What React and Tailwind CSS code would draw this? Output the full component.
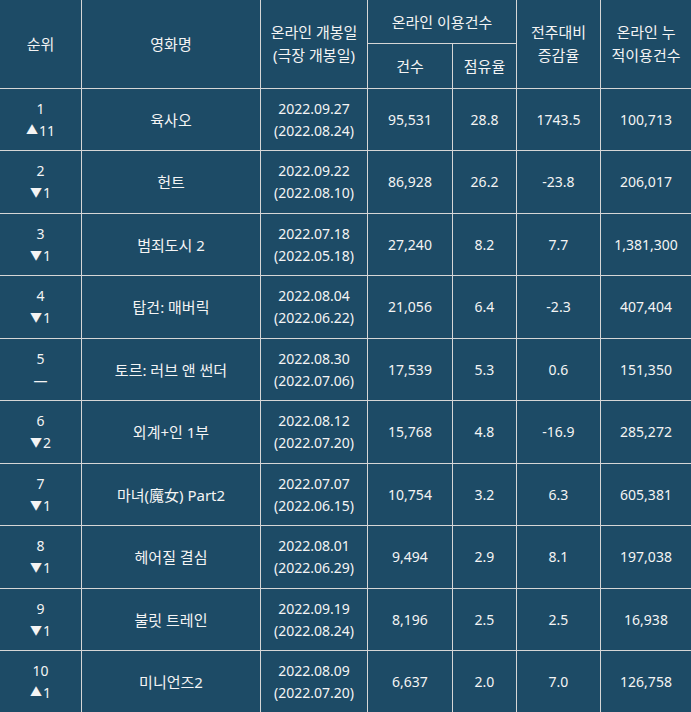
const rows = [
  { rank: 1, dir: 'up', diff: 11, title: '육사오', online: '2022.09.27', theater: '2022.08.24', count: '95,531', share: '28.8', change: '1743.5', total: '100,713' },
  { rank: 2, dir: 'down', diff: 1, title: '헌트', online: '2022.09.22', theater: '2022.08.10', count: '86,928', share: '26.2', change: '-23.8', total: '206,017' },
  { rank: 3, dir: 'down', diff: 1, title: '범죄도시 2', online: '2022.07.18', theater: '2022.05.18', count: '27,240', share: '8.2', change: '7.7', total: '1,381,300' },
  { rank: 4, dir: 'down', diff: 1, title: '탑건: 매버릭', online: '2022.08.04', theater: '2022.06.22', count: '21,056', share: '6.4', change: '-2.3', total: '407,404' },
  { rank: 5, dir: 'same', diff: null, title: '토르: 러브 앤 썬더', online: '2022.08.30', theater: '2022.07.06', count: '17,539', share: '5.3', change: '0.6', total: '151,350' },
  { rank: 6, dir: 'down', diff: 2, title: '외계+인 1부', online: '2022.08.12', theater: '2022.07.20', count: '15,768', share: '4.8', change: '-16.9', total: '285,272' },
  { rank: 7, dir: 'down', diff: 1, title: '마녀(魔女) Part2', online: '2022.07.07', theater: '2022.06.15', count: '10,754', share: '3.2', change: '6.3', total: '605,381' },
  { rank: 8, dir: 'down', diff: 1, title: '헤어질 결심', online: '2022.08.01', theater: '2022.06.29', count: '9,494', share: '2.9', change: '8.1', total: '197,038' },
  { rank: 9, dir: 'down', diff: 1, title: '불릿 트레인', online: '2022.09.19', theater: '2022.08.24', count: '8,196', share: '2.5', change: '2.5', total: '16,938' },
  { rank: 10, dir: 'up', diff: 1, title: '미니언즈2', online: '2022.08.09', theater: '2022.07.20', count: '6,637', share: '2.0', change: '7.0', total: '126,758' },
]

const cols = 'grid grid-cols-[82px_179px_107px_85px_64px_84px_90px]'
const cell = 'flex flex-col items-center justify-center text-center border-[#d6d6d6]'

function Rank({ dir, diff }) {
  if (dir === 'same') return <span>—</span>
  return (
    <span className="flex items-center">
      <span className="text-[12px] mr-[1px]">{dir === 'up' ? '▲' : '▼'}</span>
      {diff}
    </span>
  )
}

export default function App() {
  return (
    <div
      className="w-[691px] h-[712px] overflow-hidden bg-[#1d4b66] text-[#f4f4f4] text-[14px] leading-[22px]"
      style={{ fontFamily: '"Noto Sans", "Noto Sans CJK KR", sans-serif' }}
    >
      {/* header */}
      <div className={`${cols} grid-rows-[44px_45px] text-[15px]`}>
        <div className={`${cell} row-span-2 border-r border-b`}>순위</div>
        <div className={`${cell} row-span-2 border-r border-b`}>영화명</div>
        <div className={`${cell} row-span-2 border-r border-b leading-[23px]`}>
          <span>온라인 개봉일</span>
          <span>(극장 개봉일)</span>
        </div>
        <div className={`${cell} col-span-2 border-r border-b`}>온라인 이용건수</div>
        <div className={`${cell} row-span-2 border-r border-b leading-[23px]`}>
          <span>전주대비</span>
          <span>증감율</span>
        </div>
        <div className={`${cell} row-span-2 border-b leading-[23px]`}>
          <span>온라인 누</span>
          <span>적이용건수</span>
        </div>
        <div className={`${cell} border-r border-b`}>건수</div>
        <div className={`${cell} border-r border-b`}>점유율</div>
      </div>

      {/* body */}
      {rows.map((r, i) => (
        <div key={r.rank} className={`${cols} ${i % 2 === 0 ? 'h-[62px]' : 'h-[63px]'}`}>
          <div className={`${cell} border-r border-b`}>
            <span>{r.rank}</span>
            <Rank dir={r.dir} diff={r.diff} />
          </div>
          <div className={`${cell} border-r border-b text-[15px]`}>{r.title}</div>
          <div className={`${cell} border-r border-b`}>
            <span>{r.online}</span>
            <span>({r.theater})</span>
          </div>
          <div className={`${cell} border-r border-b`}>{r.count}</div>
          <div className={`${cell} border-r border-b`}>{r.share}</div>
          <div className={`${cell} border-r border-b`}>{r.change}</div>
          <div className={`${cell} border-b`}>{r.total}</div>
        </div>
      ))}
    </div>
  )
}
